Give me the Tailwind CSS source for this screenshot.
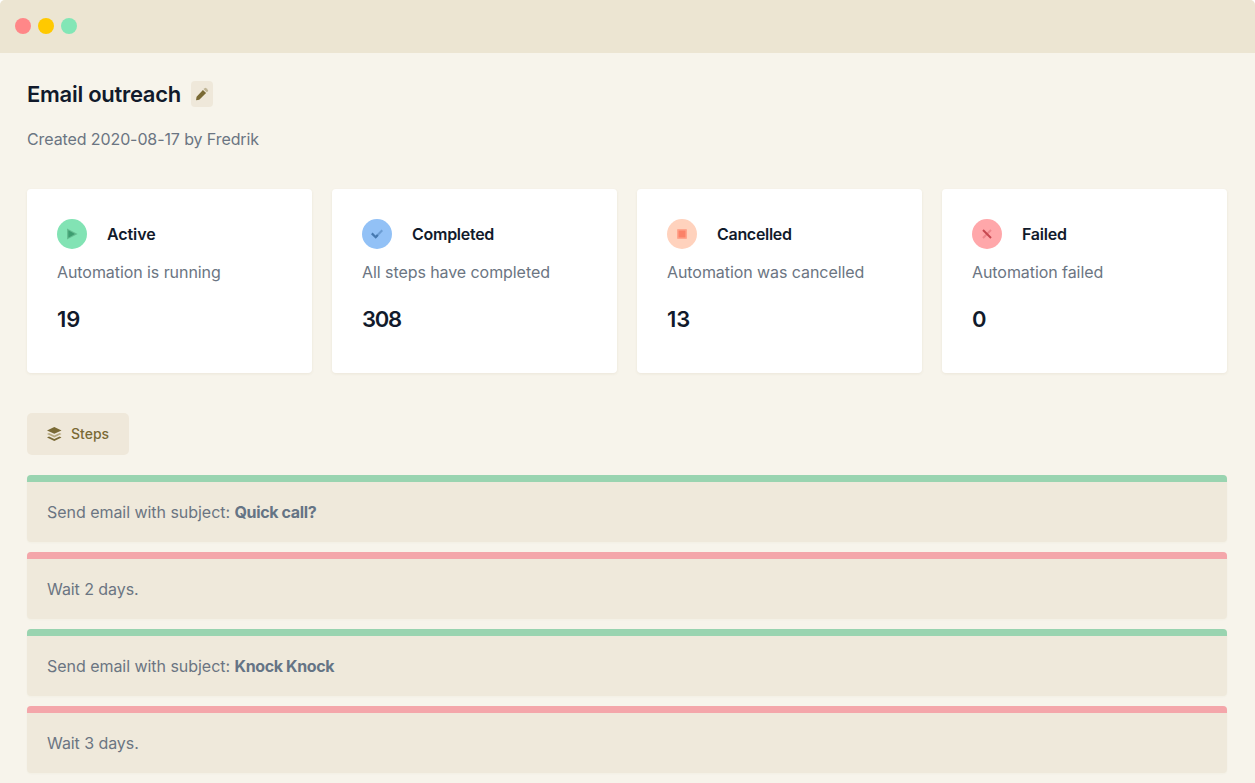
<!DOCTYPE html>
<html lang="en">
<head>
<meta charset="utf-8">
<title>Email outreach</title>
<script src="https://cdn.jsdelivr.net/npm/@tailwindcss/browser@4"></script>
</head>
<body class="bg-white font-['Inter',sans-serif] text-base tracking-[-0.07px] text-[#6b7582]">
<div class="h-[783px] overflow-hidden rounded-t-[5px] bg-[#f7f4eb]">
  <header class="flex h-[53px] items-center gap-[7px] bg-[#ece5d2] pb-px pl-[15px]">
    <span class="size-4 rounded-full bg-[#ff8788]"></span>
    <span class="size-4 rounded-full bg-[#ffc900]"></span>
    <span class="size-4 rounded-full bg-[#82e6b6]"></span>
  </header>
  <main class="px-[27px] pt-7">
    <div class="flex h-[26px] items-center gap-[10px]">
      <h1 class="text-[22px] leading-[26px] font-semibold tracking-[-0.28px] text-[#111a2b]">Email outreach</h1>
      <button class="flex h-[26px] w-[22px] items-center justify-center rounded bg-[#efe8da]">
        <svg class="size-[14px]" viewBox="0 0 24 24"><path fill="#7a6a35" d="M13.6 5 19 10.4 8.200 21.200a2 2 0 0 1-1 .55L2.6 22.500a.6.6 0 0 1-.7-.7l.7-4.600a2 2 0 0 1 .55-1z"/><path fill="#c0b596" d="m14.800 3.800 1.700-1.700a2 2 0 0 1 2.800 0l2.600 2.600a2 2 0 0 1 0 2.800l-1.700 1.700z"/></svg>
      </button>
    </div>
    <p class="mt-5 leading-6 tracking-[-0.1px]">Created 2020-08-17 by Fredrik</p>

    <section class="mt-[38px] grid w-[1200px] grid-cols-4 gap-5">
      <article class="h-[184px] rounded bg-white p-[30px] shadow-[0_1px_3px_rgba(100,80,30,0.08)]">
        <div class="flex items-center gap-5">
          <span class="flex size-[30px] items-center justify-center rounded-full bg-[#82e3b4]"><svg class="size-3" viewBox="0 0 12 12"><path fill="#65bd91" d="M1 .5 11.6 6 1 11.5z"/><path fill="#3d9d70" d="M2.3 2.3 9 6 2.3 9.7z"/></svg></span>
          <h2 class="font-semibold tracking-[-0.1px] text-[#111a2b]">Active</h2>
        </div>
        <p class="mt-[11px] leading-6">Automation is running</p>
        <p class="mt-5 text-[22px] leading-[30px] font-semibold tracking-normal text-[#111a2b]">19</p>
      </article>
      <article class="h-[184px] rounded bg-white p-[30px] shadow-[0_1px_3px_rgba(100,80,30,0.08)]">
        <div class="flex items-center gap-5">
          <span class="flex size-[30px] items-center justify-center rounded-full bg-[#92c1f6]"><svg class="size-3" viewBox="0 0 12 12" fill="none" stroke-width="2.2"><path stroke="#6c9dd3" d="M4.7 9 11.3 2.2"/><path stroke="#4679b0" d="M.8 5.4 4.7 9.2 6.8 7"/></svg></span>
          <h2 class="font-semibold tracking-[-0.27px] text-[#111a2b]">Completed</h2>
        </div>
        <p class="mt-[11px] leading-6">All steps have completed</p>
        <p class="mt-5 text-[22px] leading-[30px] font-semibold tracking-[-1.3px] text-[#111a2b]">308</p>
      </article>
      <article class="h-[184px] rounded bg-white p-[30px] shadow-[0_1px_3px_rgba(100,80,30,0.08)]">
        <div class="flex items-center gap-5">
          <span class="flex size-[30px] items-center justify-center rounded-full bg-[#ffd2bd]"><svg class="size-[10px]" viewBox="0 0 10 10"><rect width="10" height="10" rx="1" fill="#ffa68e"/><rect x="1.5" y="1.5" width="7" height="7" fill="#fb8268"/></svg></span>
          <h2 class="font-semibold tracking-[-0.3px] text-[#111a2b]">Cancelled</h2>
        </div>
        <p class="mt-[11px] leading-6">Automation was cancelled</p>
        <p class="mt-5 text-[22px] leading-[30px] font-semibold tracking-normal text-[#111a2b]">13</p>
      </article>
      <article class="h-[184px] rounded bg-white p-[30px] shadow-[0_1px_3px_rgba(100,80,30,0.08)]">
        <div class="flex items-center gap-5">
          <span class="flex size-[30px] items-center justify-center rounded-full bg-[#ffa7aa]"><svg class="size-[10px]" viewBox="0 0 10 10" stroke-width="2"><path stroke="#ee858b" d="M1 9 9 1"/><path stroke="#c6474f" d="m1 1 8 8"/></svg></span>
          <h2 class="font-semibold tracking-[-0.25px] text-[#111a2b]">Failed</h2>
        </div>
        <p class="mt-[11px] leading-6">Automation failed</p>
        <p class="mt-5 text-[22px] leading-[30px] font-semibold text-[#111a2b]">0</p>
      </article>
    </section>

    <button class="mt-10 flex h-[42px] w-[102px] items-center gap-[9px] rounded-[5px] bg-[#efe8da] pl-5 text-sm font-medium tracking-normal text-[#7a6a35]">
      <svg class="h-[14px] w-[15px]" viewBox="0 0 15 14"><path fill="#7a6a35" d="M7.300 0 14.500 3.400 7.300 6.800 0 3.400z"/><path fill="#b6a980" d="m0 6.900 2-.9 5.300 2.500L12.600 6l1.900.9-7.200 3.500z"/><path fill="#7a6a35" d="m0 10.400 2-.9 5.300 2.400 5.300-2.400 1.900.9L7.300 14z"/></svg>
      Steps
    </button>

    <section class="mt-5 flex w-[1200px] flex-col gap-[10px]">
      <div class="h-[67px] overflow-hidden rounded bg-[#efe9db] shadow-[0_1px_2px_rgba(100,80,30,0.03)]"><div class="h-[7px] bg-[#99d4b0]"></div><p class="px-5 pt-[18px] leading-6 tracking-[-0.04px]">Send email with subject: <strong class="font-bold tracking-[-0.36px] text-[#657485]">Quick call?</strong></p></div>
      <div class="h-[67px] overflow-hidden rounded bg-[#efe9db] shadow-[0_1px_2px_rgba(100,80,30,0.03)]"><div class="h-[7px] bg-[#f4a6aa]"></div><p class="px-5 pt-[18px] leading-6">Wait 2 days.</p></div>
      <div class="h-[67px] overflow-hidden rounded bg-[#efe9db] shadow-[0_1px_2px_rgba(100,80,30,0.03)]"><div class="h-[7px] bg-[#99d4b0]"></div><p class="px-5 pt-[18px] leading-6 tracking-[-0.04px]">Send email with subject: <strong class="font-bold tracking-[-0.36px] text-[#657485]">Knock Knock</strong></p></div>
      <div class="h-[67px] overflow-hidden rounded bg-[#efe9db] shadow-[0_1px_2px_rgba(100,80,30,0.03)]"><div class="h-[7px] bg-[#f4a6aa]"></div><p class="px-5 pt-[18px] leading-6">Wait 3 days.</p></div>
    </section>
  </main>
</div>
</body>
</html>
